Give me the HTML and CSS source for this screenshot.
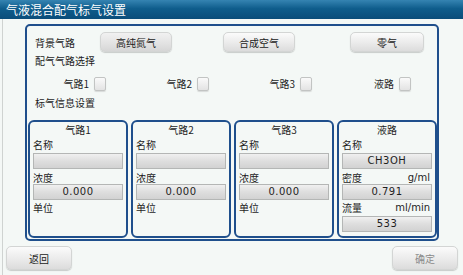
FILE: index.html
```html
<!DOCTYPE html>
<html>
<head>
<meta charset="utf-8">
<link rel="stylesheet" href="styles.css">
</head>
<body>
<div class="titlebar">气液混合配气标气设置</div>
<div class="content">
  <div class="panel">
    <div class="bg-row">
      <span class="label">背景气路</span>
      <div class="cell"><button class="btn btn-sel">高纯氮气</button></div>
      <div class="cell"><button class="btn">合成空气</button></div>
      <div class="cell"><button class="btn btn-wide">零气</button></div>
    </div>
    <div class="section">配气气路选择</div>
    <div class="check-row">
      <label class="check"><span>气路1</span><span class="box"></span></label>
      <label class="check"><span>气路2</span><span class="box"></span></label>
      <label class="check"><span>气路3</span><span class="box"></span></label>
      <label class="check"><span>液路</span><span class="box"></span></label>
    </div>
    <div class="section section-2">标气信息设置</div>
    <div class="cards">
      <div class="card">
        <div class="card-title">气路1</div>
        <div class="field-label">名称</div>
        <div class="field"></div>
        <div class="field-label mid">浓度</div>
        <div class="field">0.000</div>
        <div class="field-label">单位</div>
      </div>
      <div class="card">
        <div class="card-title">气路2</div>
        <div class="field-label">名称</div>
        <div class="field"></div>
        <div class="field-label mid">浓度</div>
        <div class="field">0.000</div>
        <div class="field-label">单位</div>
      </div>
      <div class="card">
        <div class="card-title">气路3</div>
        <div class="field-label">名称</div>
        <div class="field"></div>
        <div class="field-label mid">浓度</div>
        <div class="field">0.000</div>
        <div class="field-label">单位</div>
      </div>
      <div class="card">
        <div class="card-title">液路</div>
        <div class="field-label">名称</div>
        <div class="field">CH3OH</div>
        <div class="field-label mid"><span>密度</span><span>g/ml</span></div>
        <div class="field">0.791</div>
        <div class="field-label"><span>流量</span><span>ml/min</span></div>
        <div class="field">533</div>
      </div>
    </div>
  </div>
  <div class="footer">
    <button class="btn btn-foot">返回</button>
    <button class="btn btn-foot btn-disabled">确定</button>
  </div>
</div>
</body>
</html>
```
FILE: styles.css
```css
* { box-sizing: border-box; }
html, body {
  margin: 0;
  padding: 0;
}
body {
  width: 463px;
  height: 275px;
  overflow: hidden;
  background: #f4f8f6;
  font-family: "DejaVu Sans", "Noto Sans CJK SC", sans-serif;
  font-size: 10px;
  color: #1e1e1e;
}
.titlebar {
  height: 19px;
  line-height: 19px;
  padding-left: 6px;
  color: #ffffff;
  font-family: "Noto Sans CJK SC", sans-serif;
  font-size: 12px;
  background: linear-gradient(#3584b2, #0f5d8c 45%, #0a4d7a);
}
.content {
  margin-left: 2px;
  border-left: 1px solid #cfd3d1;
  height: 256px;
  padding-top: 5px;
}
.panel {
  margin-left: 22px;
  width: 414px;
  height: 217px;
  border: 2px solid #1f4f8c;
  border-radius: 5px;
  padding: 0 0 0 1px;
  display: flex;
  flex-direction: column;
}
.bg-row {
  margin-top: 6px;
  height: 20px;
  padding-left: 7px;
  display: grid;
  grid-template-columns: 65px 123px 127px 74px;
  align-items: center;
}
.label, .section, .check span:first-child {
  font-family: "Noto Sans CJK SC", sans-serif;
}
.btn {
  font-family: "Noto Sans CJK SC", sans-serif;
  font-size: 10px;
  color: #222;
  height: 20px;
  width: 72px;
  padding: 0;
  border: 1px solid #d3d5d4;
  border-radius: 5px;
  background: linear-gradient(#fbfbfb, #e9e9e9 60%, #dcdcdc);
  box-shadow: 0 1px 1px rgba(0,0,0,0.18);
}
.btn-sel {
  background: linear-gradient(#f1f1f1, #e2e2e2 60%, #d6d6d6);
}
.btn-wide { width: 74px; }
.section {
  margin-top: 2px;
  height: 14px;
  line-height: 14px;
  padding-left: 7px;
}
.section-2 { margin-top: 6px; }
.check-row {
  margin-top: 8px;
  height: 14px;
  padding-left: 7px;
  display: grid;
  grid-template-columns: 71px 103px 103px 99px;
}
.check {
  justify-self: end;
  display: flex;
  align-items: center;
  gap: 5px;
}
.box {
  width: 12px;
  height: 14px;
  border: 1px solid #c2c4c3;
  border-radius: 2px;
  background: linear-gradient(#fafafa, #e3e3e3);
  box-shadow: 0 1px 1px rgba(0,0,0,0.12);
}
.cards {
  margin-top: 10px;
  height: 118px;
  display: grid;
  grid-template-columns: repeat(4, 1fr);
  gap: 3px;
}
.card {
  border: 2px solid #1f4f8c;
  border-radius: 6px;
  padding: 0 3px;
  font-family: "Noto Sans CJK SC", sans-serif;
}
.card-title {
  height: 15px;
  line-height: 15px;
  text-align: center;
}
.field-label {
  height: 16px;
  line-height: 16px;
  padding-left: 0;
  display: flex;
  justify-content: space-between;
  padding-right: 2px;
}
.field-label span:last-child {
  font-family: "DejaVu Sans", sans-serif;
}
.field-label.mid {
  height: 15px;
  line-height: 17px;
}
.field {
  height: 16px;
  line-height: 14px;
  border: 1px solid #b4b6b5;
  background: linear-gradient(#f0f0f0, #dedede 50%, #d2d2d2);
  text-align: center;
  font-family: "DejaVu Sans", sans-serif;
  font-size: 10px;
  letter-spacing: 0.5px;
}
.footer {
  margin-top: 5px;
  display: flex;
  justify-content: space-between;
  padding: 0 5px 0 3px;
}
.btn-foot {
  width: 66px;
  height: 24px;
}
.btn-disabled { color: #8a8a8a; }
```
